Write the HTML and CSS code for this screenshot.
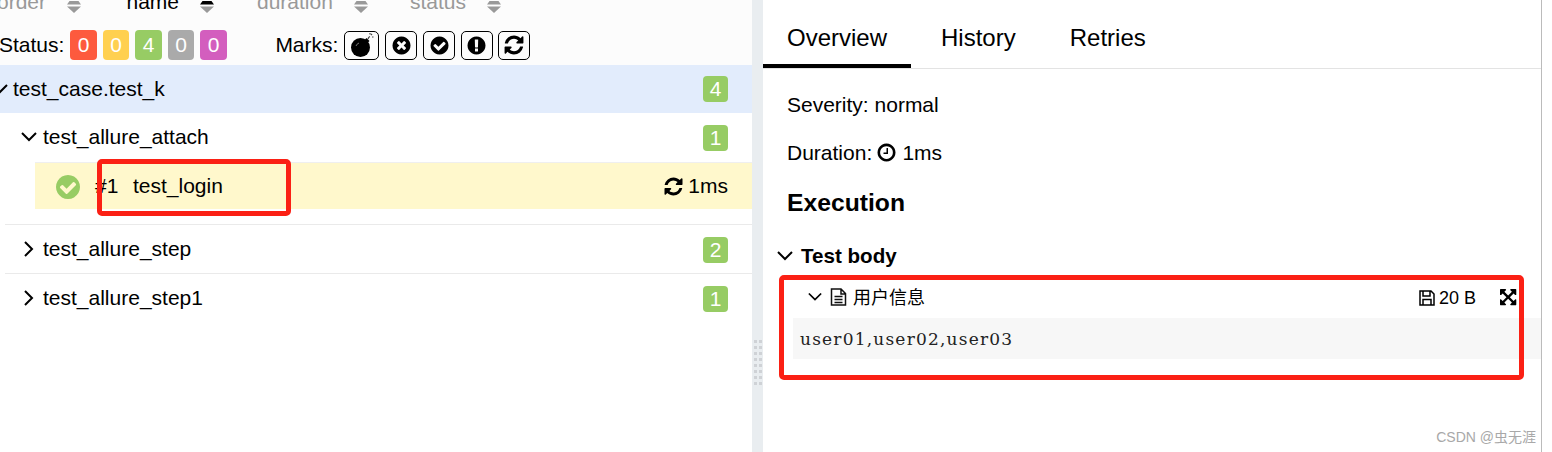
FILE: index.html
```html
<!DOCTYPE html>
<html lang="en">
<head>
<meta charset="utf-8">
<title>Allure report</title>
<link rel="stylesheet" href="styles.css">
</head>
<body>
<svg class="defs" aria-hidden="true">
  <symbol id="i-check" viewBox="0 0 1792 1792"><path d="M1412 734q0-28-18-46l-91-90q-19-19-45-19t-45 19l-408 407-226-226q-19-19-45-19t-45 19l-91 90q-18 18-18 46 0 27 18 45l362 362q19 19 45 19 27 0 46-19l543-543q18-18 18-45zm252 162q0 209-103 385.500t-279.500 279.500-385.500 103-385.500-103-279.500-279.500-103-385.500 103-385.500 279.500-279.500 385.500-103 385.500 103 279.500 279.500 103 385.500z"/></symbol>
  <symbol id="i-times" viewBox="0 0 1792 1792"><path d="M1277 1122q0-26-19-45l-181-181 181-181q19-19 19-45 0-27-19-46l-90-90q-19-19-46-19-26 0-45 19l-181 181-181-181q-19-19-45-19-27 0-46 19l-90 90q-19 19-19 46 0 26 19 45l181 181-181 181q-19 19-19 45 0 27 19 46l90 90q19 19 46 19 26 0 45-19l181-181 181 181q19 19 45 19 27 0 46-19l90-90q19-19 19-46zm387-226q0 209-103 385.500t-279.500 279.500-385.500 103-385.500-103-279.500-279.500-103-385.500 103-385.500 279.500-279.500 385.500-103 385.500 103 279.500 279.500 103 385.500z"/></symbol>
  <symbol id="i-excl" viewBox="0 0 1792 1792"><path d="M896 128q209 0 385.500 103t279.500 279.500 103 385.500-103 385.500-279.500 279.500-385.500 103-385.500-103-279.500-279.500-103-385.500 103-385.500 279.500-279.500 385.500-103zm128 1247v-190q0-14-9-23.500t-22-9.500h-192q-13 0-23 10t-10 23v190q0 13 10 23t23 10h192q13 0 22-9.500t9-23.500zm-2-344l18-621q0-12-10-18-10-8-24-8h-220q-14 0-24 8-10 6-10 18l17 621q0 10 10 17.500t24 7.500h185q14 0 23.500-7.500t10.500-17.500z"/></symbol>
  <symbol id="i-refresh" viewBox="0 0 1792 1792"><path d="M1639 1056q0 5-1 7-64 268-268 434.500t-478 166.500q-146 0-282.500-55t-243.500-157l-129 129q-19 19-45 19t-45-19-19-45v-448q0-26 19-45t45-19h448q26 0 45 19t19 45-19 45l-137 137q71 66 161 102t187 36q134 0 250-65t186-179q11-17 53-117 8-23 30-23h192q13 0 22.500 9.500t9.500 22.500zm25-800v448q0 26-19 45t-45 19h-448q-26 0-45-19t-19-45 19-45l138-138q-148-137-349-137-134 0-250 65t-186 179q-11 17-53 117-8 23-30 23h-199q-13 0-22.500-9.500t-9.500-22.500v-7q65-268 270-434.500t480-166.500q146 0 284 55.500t245 156.500l130-129q19-19 45-19t45 19 19 45z"/></symbol>
  <symbol id="i-clock" viewBox="0 0 1792 1792"><path d="M1024 544v448q0 14-9 23t-23 9h-320q-14 0-23-9t-9-23v-64q0-14 9-23t23-9h224v-352q0-14 9-23t23-9h64q14 0 23 9t9 23zm416 352q0-148-73-273t-198-198-273-73-273 73-198 198-73 273 73 273 198 198 273 73 273-73 198-198 73-273zm224 0q0 209-103 385.500t-279.500 279.500-385.500 103-385.500-103-279.500-279.500-103-385.500 103-385.500 279.500-279.500 385.500-103 385.500 103 279.500 279.500 103 385.500z"/></symbol>
  <symbol id="i-arrows" viewBox="0 0 1792 1792"><path d="M1283 413l-355 355 355 355 144-144q29-31 70-14 39 17 39 59v448q0 26-19 45t-45 19h-448q-42 0-59-40-17-39 14-69l144-144-355-355-355 355 144 144q31 30 14 69-17 40-59 40h-448q-26 0-45-19t-19-45v-448q0-42 40-59 39-17 69 14l144 144 355-355-355-355-144 144q-19 19-45 19-12 0-24-5-40-17-40-59v-448q0-26 19-45t45-19h448q42 0 59 40 17 39-14 69l-144 144 355 355 355-355-144-144q-31-30-14-69 17-40 59-40h448q26 0 45 19t19 45v448q0 42-39 59-13 5-25 5-26 0-45-19z"/></symbol>
  <symbol id="i-bomb" viewBox="0 0 24 24"><circle cx="10.500" cy="14.500" r="9.500"/><path d="M14 7.500l2.500-2.500 3 3-2.500 2.500z"/><path d="M6 13a5 5 0 0 1 3-3" fill="none" stroke="#777" stroke-width="1"/><path d="M18 6q.500-2 2-2.500M21 2l1-1M22 4h1.500M20 1.500V0" fill="none" stroke="#444" stroke-width="1.200"/></symbol>
  <symbol id="i-down" viewBox="0 0 16 16"><path d="M1 4l7 7 7-7" fill="none" stroke="currentColor" stroke-width="2"/></symbol>
  <symbol id="i-right" viewBox="0 0 16 16"><path d="M4 1l7 7-7 7" fill="none" stroke="currentColor" stroke-width="2"/></symbol>
  <symbol id="i-sort" viewBox="0 0 14 12"><path fill="currentColor" d="M2.500 0h9L14 3.500H0z"/><path fill="#999" d="M0 5.500h14L7 12z"/></symbol>
  <symbol id="i-file" viewBox="0 0 17 18"><path d="M1.500 1h9.500l4.500 4.500V17h-14zM11 1v5h4.500M4.500 8.500h8M4.500 11.500h8M4.500 14.500h8" fill="none" stroke="currentColor" stroke-width="1.500"/></symbol>
  <symbol id="i-save" viewBox="0 0 16 16"><path d="M1 1h11l3 3v11H1zM4 1v5h7V1M4 15V9.500h8V15" fill="none" stroke="currentColor" stroke-width="1.500"/></symbol>
</svg>

<main class="app">
  <section class="side">
    <header class="side-head">
      <div class="sorters">
        <div class="sorter"><span class="sorter-label">order</span><svg class="sort-icon"><use href="#i-sort"/></svg></div>
        <div class="sorter sorter-active"><span class="sorter-label">name</span><svg class="sort-icon"><use href="#i-sort"/></svg></div>
        <div class="sorter"><span class="sorter-label">duration</span><svg class="sort-icon"><use href="#i-sort"/></svg></div>
        <div class="sorter"><span class="sorter-label">status</span><svg class="sort-icon"><use href="#i-sort"/></svg></div>
      </div>
      <div class="filters">
        <span class="filter-label">Status:</span>
        <span class="badge failed">0</span>
        <span class="badge broken">0</span>
        <span class="badge passed">4</span>
        <span class="badge skipped">0</span>
        <span class="badge unknown">0</span>
        <span class="filter-label marks-label">Marks:</span>
        <span class="mark mark-wide"><svg class="mark-icon bomb"><use href="#i-bomb"/></svg></span>
        <span class="mark"><svg class="mark-icon"><use href="#i-times"/></svg></span>
        <span class="mark"><svg class="mark-icon"><use href="#i-check"/></svg></span>
        <span class="mark"><svg class="mark-icon"><use href="#i-excl"/></svg></span>
        <span class="mark"><svg class="mark-icon mark-refresh"><use href="#i-refresh"/></svg></span>
      </div>
    </header>

    <div class="tree-root">
      <svg class="chev"><use href="#i-down"/></svg>
      <span class="node-name">test_case.test_k</span>
      <span class="badge passed count">4</span>
    </div>

    <div class="group group-open">
      <div class="group-head">
        <svg class="chev"><use href="#i-down"/></svg>
        <span class="node-name">test_allure_attach</span>
        <span class="badge passed count">1</span>
      </div>
      <div class="leaf">
        <svg class="leaf-status"><use href="#i-check"/></svg>
        <span class="leaf-order">#1</span>
        <span class="node-name">test_login</span>
        <span class="leaf-time"><svg class="leaf-refresh"><use href="#i-refresh"/></svg>1ms</span>
      </div>
    </div>
    <div class="group">
      <div class="group-head">
        <svg class="chev"><use href="#i-right"/></svg>
        <span class="node-name">test_allure_step</span>
        <span class="badge passed count">2</span>
      </div>
    </div>
    <div class="group group-last">
      <div class="group-head">
        <svg class="chev"><use href="#i-right"/></svg>
        <span class="node-name">test_allure_step1</span>
        <span class="badge passed count">1</span>
      </div>
    </div>
  </section>

  <div class="splitter"><span class="grip"></span></div>

  <section class="detail">
    <nav class="tabs">
      <span class="tab tab-active">Overview</span>
      <span class="tab">History</span>
      <span class="tab">Retries</span>
    </nav>
    <div class="body">
      <p class="meta">Severity: normal</p>
      <p class="meta">Duration: <svg class="clock"><use href="#i-clock"/></svg> 1ms</p>
      <h2 class="heading">Execution</h2>
      <div class="stage">
        <svg class="chev"><use href="#i-down"/></svg>
        <span>Test body</span>
      </div>
      <div class="attach-head">
        <svg class="chev chev-small"><use href="#i-down"/></svg>
        <svg class="file"><use href="#i-file"/></svg>
        <span class="attach-name">用户信息</span>
        <svg class="save"><use href="#i-save"/></svg>
        <span class="attach-size">20 B</span>
        <svg class="expand"><use href="#i-arrows"/></svg>
      </div>
      <pre class="attach-code">user01,user02,user03</pre>
    </div>
  </section>
  <div class="scroll-edge"></div>
</main>

<div class="callout callout-login"></div>
<div class="callout callout-attach"></div>
<span class="watermark">CSDN @虫无涯</span>
</body>
</html>
```

FILE: styles.css
```css
* { box-sizing: border-box; }

html, body {
  margin: 0;
  height: 452px;
  overflow: hidden;
  background: #fff;
  color: #000;
  font-family: "Liberation Sans", "Noto Sans CJK SC", sans-serif;
  font-size: 21px;
}

.defs { width: 0; height: 0; position: absolute; }

.app { display: flex; height: 452px; position: relative; }

/* left pane */
.side { width: 752px; flex: none; overflow: hidden; }

.side-head { height: 65px; background: #fcfcfc; overflow: hidden; }

.sorters {
  display: flex;
  height: 22px;
  margin-top: -9px;
  margin-left: -3px;
  align-items: center;
  color: #999;
}
.sorter { display: flex; align-items: center; }
.sorter:nth-child(1) { width: 129.500px; }
.sorter:nth-child(2) { width: 130.500px; }
.sorter:nth-child(3) { width: 153px; }
.sorter-active { color: #000; }
.sorter-label { line-height: 22px; }
.sort-icon { width: 14px; height: 12px; margin-left: 21px; margin-top: 10px; flex: none; }

.filters {
  display: flex;
  align-items: center;
  height: 30px;
  margin-top: 17px;
  margin-left: -1px;
}
.filter-label { margin-right: 6px; }
.marks-label { margin-left: 42.500px; }

.badge {
  display: flex;
  align-items: center;
  justify-content: center;
  width: 26.500px;
  height: 30px;
  margin-right: 6px;
  border-radius: 4px;
  color: #fff;
}
.failed { background: #fd5a3e; }
.broken { background: #ffd050; }
.passed { background: #97cc64; }
.skipped { background: #aaa; }
.unknown { background: #d35ebe; }

.mark {
  display: flex;
  align-items: center;
  justify-content: center;
  width: 32px;
  height: 29px;
  margin-right: 5.700px;
  border: 1px solid #000;
  border-radius: 5px;
}
.mark-wide { width: 35px; margin-right: 6px; }
.mark-icon { width: 21px; height: 21px; }
.mark-refresh { width: 22px; height: 22px; }
.bomb { width: 24px; height: 24px; }

/* tree */
.tree-root, .group-head {
  display: flex;
  align-items: center;
  height: 48px;
  padding-right: 24px;
}
.tree-root {
  padding-bottom: 1px;
  background: #e2ecfc;
}
.tree-root .chev { margin-left: -8px; margin-right: 5px; }

.chev { width: 16px; height: 16px; flex: none; color: #000; }
.node-name { flex: 1; }

.count { width: 25px; height: 26px; margin-right: 0; flex: none; }

.group { margin-left: 5px; border-bottom: 1px solid #eaeaea; }
.group .group-head { padding-left: 16px; }
.group .chev { margin-right: 6px; }
.group .count { margin-top: 2px; }
.group-open { padding-bottom: 15px; }
.group-open .group-head { height: 49px; padding-bottom: 1px; }
.group-last { border-bottom: 0; }

.leaf {
  display: flex;
  align-items: center;
  height: 47px;
  margin-left: 30px;
  padding: 0 24px 0 19px;
  background: #fff8cc;
  border-top: 1px solid #efefef;
}
.leaf-status { width: 28px; height: 28px; fill: #97cc64; flex: none; margin: 1px 13px 0 0; }
.leaf-order { width: 38px; flex: none; }
.leaf-time { display: flex; align-items: center; }
.leaf-refresh { width: 21px; height: 21px; margin-right: 4px; }

.splitter {
  width: 11px;
  flex: none;
  background: #e9edf0;
  padding: 340px 0 0 2px;
}
.grip {
  display: block;
  width: 8px;
  height: 45px;
  background: repeating-linear-gradient(to right, #cfd2d6 0 3px, transparent 3px 5px);
  -webkit-mask: repeating-linear-gradient(to bottom, #000 0 3px, transparent 3px 6px);
  mask: repeating-linear-gradient(to bottom, #000 0 3px, transparent 3px 6px);
}

/* right pane */
.detail { width: 778px; flex: none; }

.tabs {
  display: flex;
  height: 69px;
  border-bottom: 1px solid #e3e3e3;
  font-size: 24px;
}
.tab {
  height: 68px;
  padding: 24px 24px 0;
  margin-right: 6px;
  line-height: 28px;
}
.tab-active { border-bottom: 4px solid #000; }

.body { padding: 24px 0 0 24px; }

.meta { margin: 0 0 24px; line-height: 24px; }
.clock { width: 21px; height: 21px; vertical-align: -3px; margin-left: -2.500px; }

.heading {
  margin: 0;
  font-size: 24.700px;
  line-height: 28px;
}

.stage {
  display: flex;
  align-items: center;
  height: 30px;
  margin-top: 24px;
  margin-left: -10px;
  font-size: 20.600px;
  font-weight: bold;
}
.stage .chev { margin-right: 8px; }

.attach-head {
  display: flex;
  align-items: center;
  height: 30px;
  margin-top: 11px;
  margin-left: 21px;
  padding-right: 22px;
}
.chev-small { width: 14px; height: 14px; margin-right: 8px; }
.file { width: 17px; height: 18px; margin-right: 6px; color: #111; }
.attach-name { flex: 1; font-size: 18px; padding-bottom: 2px; }
.save { width: 16px; height: 16px; margin: 2px 4px 0 0; }
.attach-size { margin: 2px 24px 0 0; font-size: 18px; }
.expand { width: 19px; height: 19px; margin-top: 2px; }

.attach-code {
  margin: 6px 0 0 6px;
  height: 41px;
  padding: 1px 7px 0;
  background: #f7f7f7;
  font-family: "DejaVu Serif", serif;
  font-size: 17px;
  line-height: 41px;
  letter-spacing: 1.200px;
  color: #222;
}

.scroll-edge { width: 1px; background: #bbb; flex: none; }

/* annotation overlays */
.callout {
  position: absolute;
  border: 5px solid #fb2014;
  border-radius: 5px;
}
.callout-login { left: 97px; top: 159px; width: 194px; height: 57px; }
.callout-attach { left: 779px; top: 275px; width: 745px; height: 105px; }

.watermark {
  position: absolute;
  right: 16px;
  top: 426px;
  font-size: 14px;
  color: #a8a8a8;
}
```
